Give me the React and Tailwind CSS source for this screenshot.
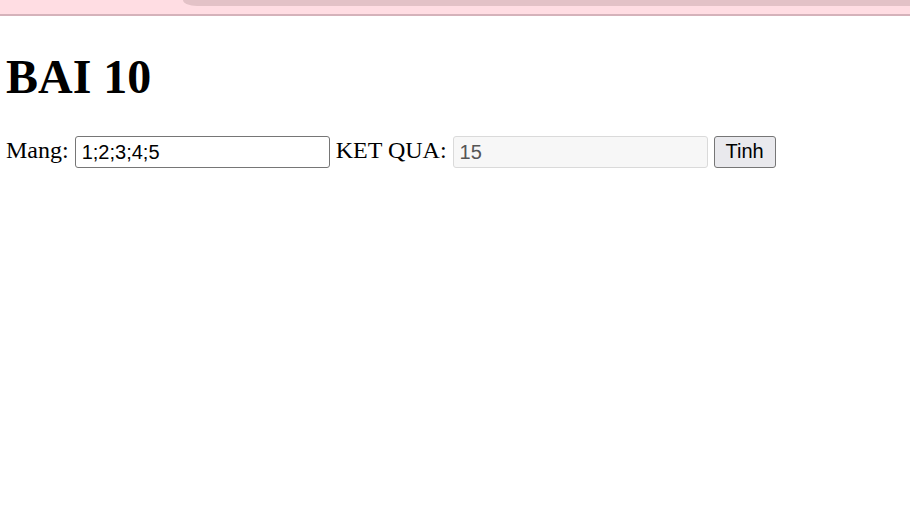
import React, { useState } from 'react';

const App = () => {
  const [mang, setMang] = useState('1;2;3;4;5');
  const [ketQua, setKetQua] = useState('15');

  const tinh = () => {
    const sum = mang
      .split(';')
      .map((s) => parseFloat(s))
      .filter((n) => !isNaN(n))
      .reduce((a, b) => a + b, 0);
    setKetQua(String(sum));
  };

  return (
    <div className="min-h-[508px] bg-white text-black">
      {/* top browser-ish strip */}
      <div className="h-[16px] bg-[#ffdde3] border-b-2 border-[#d5b2ba]">
        <div className="ml-[183px] h-[6px] bg-[#e3c2c7] rounded-bl-[14px_6px]" />
      </div>

      <div className="px-[6px] font-['Liberation_Serif',serif] text-[24px]">
        <h1 className="mt-[33px] mb-[29px] text-[48px] font-bold leading-[55px]">BAI 10</h1>
        <div className="leading-[34px]">
          Mang:{' '}
          <input
            type="text"
            value={mang}
            onChange={(e) => setMang(e.target.value)}
            className="w-[255px] h-[32px] align-middle px-[6px] border border-[#767676] rounded-[3px] font-['Liberation_Sans',sans-serif] text-[20px] text-black outline-none"
          />{' '}
          KET QUA:{' '}
          <input
            type="text"
            value={ketQua}
            readOnly
            className="w-[255px] h-[32px] align-middle px-[6px] border border-[#dadada] rounded-[3px] bg-[#f7f7f7] font-['Liberation_Sans',sans-serif] text-[20px] text-[#555] outline-none"
          />{' '}
          <button
            onClick={tinh}
            className="h-[32px] w-[62px] align-middle border border-[#767676] rounded-[3px] bg-[#e9e9ed] font-['Liberation_Sans',sans-serif] text-[20px] leading-[22px] pb-[2px] text-black"
          >
            Tinh
          </button>
        </div>
      </div>
    </div>
  );
};

export default App;
